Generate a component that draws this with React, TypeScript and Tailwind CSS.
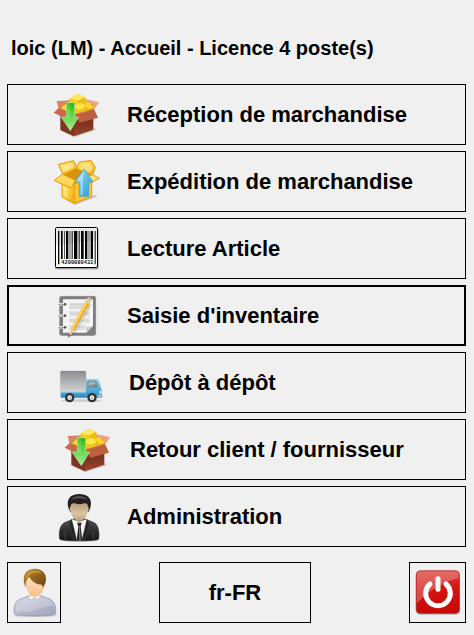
import type { ReactNode } from "react";

type Entry = {
  label: string;
  icon: ReactNode;
  layout: string;
  focused?: boolean;
};

const ENTRIES: Entry[] = [
  { label: "Réception de marchandise", icon: <ReceiveIcon />, layout: "pl-[43px] gap-[23px]" },
  { label: "Expédition de marchandise", icon: <ShipIcon />, layout: "pl-[43px] gap-[23px]" },
  { label: "Lecture Article", icon: <BarcodeIcon />, layout: "pl-[43px] gap-[23px]" },
  { label: "Saisie d'inventaire", icon: <NotebookIcon />, layout: "pl-[43px] gap-[23px]", focused: true },
  { label: "Dépôt à dépôt", icon: <TruckIcon />, layout: "pl-[43px] gap-[25px]" },
  { label: "Retour client / fournisseur", icon: <ReceiveIcon />, layout: "pl-[54px] gap-[15px]" },
  { label: "Administration", icon: <AdminIcon />, layout: "pl-[43px] gap-[23px]" },
];

export default function App() {
  return (
    <main className="flex min-h-screen flex-col bg-[#f0f0f0] pb-3 pl-[7px] pr-2 pt-9 font-['Liberation_Sans',Arial,sans-serif] font-bold text-black">
      <h1 className="pl-1 text-[20px] leading-6">loic (LM) - Accueil - Licence 4 poste(s)</h1>

      <nav className="mt-6 flex flex-col gap-[6px]">
        {ENTRIES.map((entry) => (
          <MenuButton key={entry.label} {...entry} />
        ))}
      </nav>

      <footer className="mt-[15px] flex items-stretch justify-between">
        <button type="button" aria-label="Utilisateur" className="flex h-[61px] w-[54px] items-center justify-center border border-black">
          <UserIcon />
        </button>
        <button type="button" className="h-[61px] w-[152px] border border-black text-[22px] leading-6">
          fr-FR
        </button>
        <button type="button" aria-label="Quitter" className="flex h-[61px] w-[57px] items-center justify-center border border-black">
          <PowerIcon />
        </button>
      </footer>
    </main>
  );
}

function MenuButton({ label, icon, layout, focused }: Entry) {
  return (
    <button
      type="button"
      className={`flex h-[61px] w-full items-center border border-black text-left text-[22px] leading-6 ${layout} ${
        focused ? "shadow-[inset_0_0_0_1px_#000]" : ""
      }`}
    >
      {icon}
      <span>{label}</span>
    </button>
  );
}

/* ------------------------------- icons ------------------------------- */
function MenuIcon({ children }: { children: ReactNode }) {
  return (
    <svg className="size-[53px] shrink-0" viewBox="18 6 159 159" aria-hidden="true">
      {children}
    </svg>
  );
}

function ReceiveIcon() {
  return (
    <MenuIcon>
      <defs>
        <linearGradient id="gold" x1="0" y1="0" x2="1" y2="1">
          <stop offset="0" stopColor="#ffe64a" />
          <stop offset="1" stopColor="#efb600" />
        </linearGradient>
        <linearGradient id="greenArrow" x1="0" y1="0" x2="0" y2="1">
          <stop offset="0" stopColor="#2fae1c" />
          <stop offset=".35" stopColor="#58d237" />
          <stop offset="1" stopColor="#a2ef9a" />
        </linearGradient>
        <linearGradient id="boxFront" x1="0" y1="0" x2="0" y2="1">
          <stop offset="0" stopColor="#6a2a18" />
          <stop offset="1" stopColor="#9a452b" />
        </linearGradient>
      </defs>
      <path d="M46 134 87 154 148 134 154 126 110 141z" fill="#000" opacity=".16" />
      <path d="M35 45 80 43 66 66 41 68z" fill="#d98265" />
      <path d="M116 38 163 49 146 71 120 62z" fill="#f0a083" />
      <path d="M43 67 74 43 142 55 147 71 86 90z" fill="#c9960c" />
      <path d="M48 66 70 47 99 50 103 82 86 88z" fill="url(#gold)" />
      <path d="M74 37 97 24 121 33 121 52 97 60 74 51z" fill="#f6cb17" />
      <path d="M74 37 97 24 121 33 98 44z" fill="#ffe85f" />
      <path d="M98 44 121 33 121 52 98 60z" fill="#e9be13" />
      <path d="M80 62 106 50 128 60 124 79 103 85 85 80z" fill="#f4c415" />
      <path d="M80 62 106 50 128 60 104 71z" fill="#ffe44c" />
      <path d="M117 53 130 49 147 64 142 73 124 79z" fill="#e9b90f" />
      <path d="M117 53 130 49 147 64 128 69z" fill="#fad737" />
      <path d="M46 86 87 98V151L46 132z" fill="#7c3420" />
      <path d="M87 98 145 84V131L87 151z" fill="url(#boxFront)" />
      <path d="M41 66 87 85 76 104 26 80z" fill="#c66a4b" />
      <path d="M87 86 147 69 159 95 104 110z" fill="#bd6040" />
      <path d="M87 86 147 69" stroke="#d88a6a" strokeWidth="2" />
      <path d="M64 50h25v43h12l-25 41-28-41h16z" fill="url(#greenArrow)" stroke="#cfeebd" strokeWidth="1.5" />
      <path d="M66 52h9v44H52l14-1z" fill="#fff" opacity=".15" />
    </MenuIcon>
  );
}

function ShipIcon() {
  return (
    <MenuIcon>
      <defs>
        <linearGradient id="carton" x1="0" y1="0" x2="1" y2="1">
          <stop offset="0" stopColor="#ffe980" />
          <stop offset=".55" stopColor="#fcc936" />
          <stop offset="1" stopColor="#f4a816" />
        </linearGradient>
        <linearGradient id="blueArrow" x1="0" y1="0" x2="1" y2="1">
          <stop offset="0" stopColor="#a9e0f8" />
          <stop offset=".55" stopColor="#55b9e8" />
          <stop offset="1" stopColor="#289ad2" />
        </linearGradient>
      </defs>
      <path d="M62 140 90 155 150 133 158 124 107 142z" fill="#000" opacity=".2" />
      <g stroke="#e99a08" strokeWidth="3" strokeLinejoin="round">
        <path d="M52 63 94 45 142 68 88 91z" fill="#d8930f" />
        <path d="M40 34 86 23 97 45 54 65z" fill="url(#carton)" />
        <path d="M103 27 138 22 151 43 143 66 94 47z" fill="url(#carton)" />
        <path d="M51 76 88 93 88 151 51 132z" fill="url(#carton)" />
        <path d="M88 93 140 77 140 131 88 151z" fill="#fbc630" />
        <path d="M52 63 91 82 79 105 28 83z" fill="#ffd95b" />
        <path d="M91 82 143 65 163 76 108 102z" fill="#ffe474" />
      </g>
      <path d="M47 39 82 29 88 43 54 58z" fill="#fff6c6" opacity=".55" />
      <path d="M113 34 135 29 143 43 137 58 105 47z" fill="#fff3b4" opacity=".55" />
      <path d="M55 100 69 107 69 136 55 128z" fill="#fff3a4" opacity=".5" />
      <path d="M117 48 145 87H131v43H103V87H89z" fill="url(#blueArrow)" stroke="#3c9fd2" strokeWidth="2" strokeLinejoin="round" />
      <path d="M117 54 95 85h12v41h6V82z" fill="#dff5ff" opacity=".5" />
    </MenuIcon>
  );
}

// [x, width] of each printed bar
const BARS = [
  [39, 4], [48, 5], [57, 2], [63, 7], [74, 2], [80, 3], [87, 10], [101, 3],
  [108, 8], [120, 7], [131, 2], [137, 7], [149, 3],
];

function BarcodeIcon() {
  return (
    <MenuIcon>
      <rect x="29" y="26" width="133" height="124" rx="6" fill="#000" opacity=".12" />
      <rect x="31" y="25" width="129" height="122" rx="4" fill="#000" opacity=".25" />
      <rect x="31.5" y="22.5" width="126" height="120" rx="4" fill="#fff" stroke="#000" strokeWidth="3" />
      <path d="M34 25h121v36L34 76z" fill="#e6e6e6" />
      {BARS.map(([x, width]) => (
        <rect key={x} x={x} y="33" width={width} height={x === 39 || x === 149 ? 100 : 84} fill="#050505" />
      ))}
      <text x="49" y="132" fontSize="16" fontWeight="700" fontFamily="Liberation Mono, monospace" fill="#111">
        4200080433
      </text>
    </MenuIcon>
  );
}

function NotebookIcon() {
  return (
    <MenuIcon>
      <defs>
        <linearGradient id="pencil" x1="0" y1="0" x2="1" y2="1">
          <stop offset=".3" stopColor="#ffc843" />
          <stop offset=".7" stopColor="#ed9516" />
        </linearGradient>
      </defs>
      <rect x="43" y="27" width="110" height="119" rx="7" fill="#7d7d7d" />
      <rect x="44" y="28" width="108" height="117" rx="6" fill="none" stroke="#a0a0a0" strokeWidth="2" />
      <path d="M54 37h90v80l-20 20H54z" fill="#f4f4f4" />
      <path d="M124 137V121l20-4z" fill="#c9c9c9" />
      <path d="M73 47h60v20H73zM73 73h60v15H73zM73 94h60v13H73zM73 113h48v16H73z" fill="#dedede" />
      <path d="M73 52h60M73 60h60M73 79h60M73 100h60M73 120h48" stroke="#d0d0d0" strokeWidth="2" />
      {[52, 86, 121].map((y) => (
        <g key={y}>
          <path d={`M39 ${y}h21`} stroke="#f2f2f2" strokeWidth="7" />
          <path d={`M40 ${y + 1}h20`} stroke="#999" strokeWidth="3" />
          <circle cx="60" cy={y} r="4" fill="#555" />
        </g>
      ))}
      <path d="M73 153 125 47 142 54 91 140z" fill="#000" opacity=".1" />
      <path d="M78 126 121 42 134 50 87 132z" fill="url(#pencil)" />
      <path d="M80 126 122 44 126 47 83 128z" fill="#ffe07a" />
      <path d="M78 126 87 132 72 150 69 148z" fill="#edcb9e" />
      <path d="M71 141 76 144 71 151 69 150z" fill="#444" />
      <path d="M121 42 126 34 139 42 134 50z" fill="#cfcfcf" />
      <path d="M126 34C130 25 142 31 139 42z" fill="#f3a695" />
    </MenuIcon>
  );
}

function TruckIcon() {
  return (
    <MenuIcon>
      <defs>
        <linearGradient id="cargo" x1="0" y1="0" x2="0" y2="1">
          <stop offset="0" stopColor="#8b8f92" />
          <stop offset="1" stopColor="#d3d5d6" />
        </linearGradient>
        <linearGradient id="cab" x1="0" y1="0" x2="0" y2="1">
          <stop offset="0" stopColor="#8ad6f2" />
          <stop offset="1" stopColor="#2b8bc2" />
        </linearGradient>
      </defs>
      <g transform="translate(15 12)">
        <ellipse cx="94" cy="128" rx="62" ry="4" fill="#000" opacity=".15" />
        <path d="M32 101h76V63h32q5 0 7 6l6 21q2 3 2 8v21H32z" fill="url(#cab)" />
        <path d="M33 102h75v4H33z" fill="#8cd3ef" opacity=".65" />
        <path d="M31 42q0-3 4-3h69q4 0 4 4v59H31z" fill="url(#cargo)" stroke="#aaa" />
        <path d="M33 41h73" stroke="#888" strokeWidth="2" />
        <path d="M112 71q0-3 4-3h19q4 0 5 4l5 17h-33z" fill="#7d8d94" />
        <path d="M116 71h18l3 7-21 5z" fill="#b4c5cc" opacity=".7" />
        <path d="M142 110h14q3 0 3 4t-4 5h-13z" fill="#b4babd" />
        <path d="M148 99h6v8h-6z" fill="#d3edf7" />
        {[59, 126].map((x) => (
          <g key={x}>
            <circle cx={x} cy="119" r="14" fill="#333" />
            <circle cx={x} cy="119" r="7" fill="#f0f0f0" />
            <circle cx={x} cy="119" r="3" fill="#aaa" />
          </g>
        ))}
      </g>
    </MenuIcon>
  );
}

function AdminIcon() {
  return (
    <MenuIcon>
      <defs>
        <linearGradient id="suit" x1="0" y1="0" x2="0" y2="1">
          <stop offset="0" stopColor="#4c4c4c" />
          <stop offset=".5" stopColor="#303030" />
          <stop offset="1" stopColor="#161616" />
        </linearGradient>
        <linearGradient id="adminFace" x1="0" y1="0" x2="0" y2="1">
          <stop offset="0" stopColor="#b39d78" />
          <stop offset=".6" stopColor="#dac6a0" />
          <stop offset="1" stopColor="#b79f78" />
        </linearGradient>
      </defs>
      <ellipse cx="103" cy="157" rx="58" ry="4" fill="#000" opacity=".25" />
      <path d="M44 153C41 133 45 110 59 104L85 93h36l26 11c14 7 16 30 14 49-4 7-113 7-117 0z" fill="url(#suit)" stroke="#222" strokeWidth="2" />
      <path d="M80 93 103 101 126 93 118 157H88z" fill="#f4f4f4" />
      <path d="M96 104h14l-3 11 5 42H95l5-42z" fill="#252525" />
      <path d="M102 115h3l2 42h-4z" fill="#777" />
      <path d="M80 93 74 108 86 158H96z" fill="#242424" stroke="#555" />
      <path d="M126 93 133 108 120 158H110z" fill="#242424" stroke="#555" />
      <path d="M51 119q6-10 19-12M154 119q-6-10-15-12M61 131v23M145 131v23" stroke="#595959" strokeWidth="2" fill="none" />
      <path d="M71 62C62 36 75 18 103 18s41 18 32 44l-5 10H76z" fill="#202020" />
      <path d="M77 54C77 47 83 44 90 46 99 50 108 50 117 46 124 44 129 48 129 56C133 58 131 68 128 71C124 90 113 99 103 99S81 90 77 71C73 67 73 58 77 54z" fill="url(#adminFace)" />
      <path d="M78 36c10-15 39-16 49 0-13-7-33-7-49 0z" fill="#555" />
    </MenuIcon>
  );
}

function UserIcon() {
  return (
    <svg className="h-[57px] w-[48px] shrink-0" viewBox="30 27 144 171" aria-hidden="true">
      <defs>
        <linearGradient id="shirt" x1="0" y1="0" x2="1" y2="1">
          <stop offset="0" stopColor="#d0d3e0" />
          <stop offset=".5" stopColor="#b5b9cc" />
          <stop offset="1" stopColor="#a0a4ba" />
        </linearGradient>
        <linearGradient id="hair" x1="0" y1="0" x2="1" y2="1">
          <stop offset="0" stopColor="#bb862c" />
          <stop offset="1" stopColor="#68430e" />
        </linearGradient>
        <linearGradient id="userFace" x1="0" y1="0" x2="0" y2="1">
          <stop offset="0" stopColor="#ffe3c4" />
          <stop offset="1" stopColor="#f9bd87" />
        </linearGradient>
      </defs>
      <ellipse cx="105" cy="182" rx="63" ry="4" fill="#000" opacity=".2" />
      <path d="M43 177C39 151 48 134 67 130L88 122h35l20 8c19 5 26 22 24 47-12 7-111 7-124 0z" fill="url(#shirt)" stroke="#8e93ae" strokeWidth="2" />
      <path d="M46 170c-1-20 6-34 23-38l21-7 18 8 17-8 19 8c11 4 17 11 19 20-29-4-54 18-81 17z" fill="#fff" opacity=".22" />
      <path d="M88 122 91 133 103 127 113 132 122 121z" fill="#fff" />
      <path d="M79 75Q85 62 104 62q26 3 27 25c0 24-12 38-27 38S76 101 79 75z" fill="url(#userFace)" stroke="#dfa36d" strokeWidth="1" />
      <path d="M77 98C66 72 70 46 98 42c29-4 47 18 38 43l-7 13-3-9c-19 0-31-11-38-23-8 6-12 15-11 32z" fill="url(#hair)" />
      <path d="M76 64c7-19 34-25 50-8-14-5-31-4-38 6-4 3-8 8-12 12z" fill="#d9a545" opacity=".6" />
    </svg>
  );
}

function PowerIcon() {
  return (
    <svg className="size-[49px] shrink-0" viewBox="39 38 147 147" aria-hidden="true">
      <defs>
        <linearGradient id="powerRed" x1="0" y1="0" x2="0" y2="1">
          <stop offset="0" stopColor="#d93a35" />
          <stop offset=".45" stopColor="#d3130f" />
          <stop offset="1" stopColor="#c80807" />
        </linearGradient>
      </defs>
      <rect x="47" y="48" width="133" height="130" rx="13" fill="#000" opacity=".25" />
      <rect x="49" y="46" width="129" height="128" rx="12" fill="url(#powerRed)" stroke="#aa2020" strokeWidth="2" />
      <path d="M51 58q0-10 10-10h105q10 0 10 10v11C137 76 90 103 51 144z" fill="#fff" opacity=".25" />
      <path d="M90 86a37 37 0 1 0 48 0" fill="none" stroke="#fff" strokeWidth="15" strokeLinecap="round" />
      <path d="M114 70v32" stroke="#fff" strokeWidth="15" strokeLinecap="round" />
    </svg>
  );
}
